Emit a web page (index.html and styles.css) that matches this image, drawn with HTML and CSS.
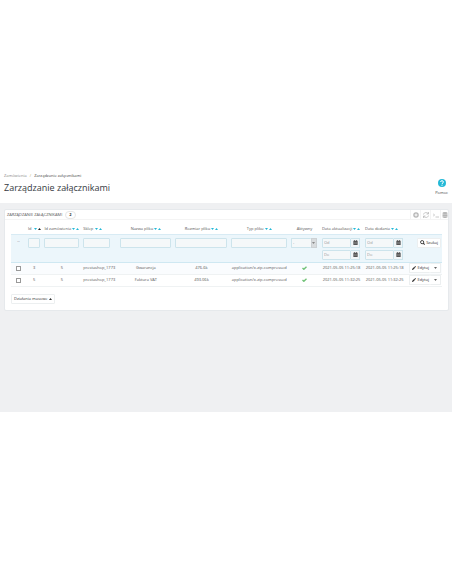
FILE: index.html
```html
<!DOCTYPE html>
<html lang="pl">

<head>
    <meta charset="UTF-8">
    <meta name="viewport" content="width=device-width, initial-scale=1.0">
    <title>Zarządzanie załącznikami</title>
    <link rel="stylesheet" href="styles.css">
</head>

<body>
    <svg width="0" height="0" class="sprite" aria-hidden="true">
        <symbol id="down" viewBox="0 0 6 4"><path d="M0 0h6L3 4z" fill="currentColor"/></symbol>
        <symbol id="up" viewBox="0 0 6 4"><path d="M0 4h6L3 0z" fill="currentColor"/></symbol>
        <symbol id="calendar" viewBox="0 0 14 14"><path d="M1 2h2V0h2v2h4V0h2v2h2v12H1zM3 6v1h2V6zm3 0v1h2V6zm3 0v1h2V6zM3 9v1h2V9zm3 0v1h2V9zm3 0v1h2V9z" fill="currentColor" fill-rule="evenodd"/></symbol>
        <symbol id="check" viewBox="0 0 14 12"><path d="M1 6l4 4 8-8" fill="none" stroke="currentColor" stroke-width="4"/></symbol>
        <symbol id="pencil" viewBox="0 0 14 14"><path d="M0 14l1-4 7-7 3 3-7 7zM9 2l2-2 3 3-2 2z" fill="currentColor"/></symbol>
        <symbol id="search" viewBox="0 0 14 14"><circle cx="6" cy="6" r="4.5" fill="none" stroke="currentColor" stroke-width="2.5"/><path d="M9 9l4 4" stroke="currentColor" stroke-width="3"/></symbol>
    </svg>

    <header class="page-head">
        <div>
            <nav class="breadcrumb">
                <a href="#">Zamówienia</a><span class="slash">/</span><span>Zarządzanie załącznikami</span>
            </nav>
            <h1>Zarządzanie załącznikami</h1>
        </div>
        <a href="#" class="help">
            <svg viewBox="0 0 20 20"><circle cx="10" cy="10" r="10" fill="#25b9d7"/><path d="M6.5 7.5c0-4.5 7-4.5 7 0 0 2.5-3.5 2.5-3.5 5" fill="none" stroke="#fff" stroke-width="2.5"/><circle cx="10" cy="15.5" r="1.5" fill="#fff"/></svg>
            <span>Pomoc</span>
        </a>
    </header>

    <main class="content">
        <section class="panel">
            <div class="panel-heading">
                <h2>ZARZĄDZANIE ZAŁĄCZNIKAMI</h2>
                <span class="count">2</span>
                <div class="tools">
                    <button type="button" aria-label="Dodaj"><svg viewBox="0 0 12 12"><circle cx="6" cy="6" r="5.5" fill="currentColor"/><path d="M6 3v6M3 6h6" stroke="#fff" stroke-width="2"/></svg></button>
                    <button type="button" aria-label="Odśwież"><svg viewBox="0 0 12 12"><path d="M1 5c1-5 8-5 10-1M11 0v4H7M11 7c-1 5-8 5-10 1M1 12V8h4" fill="none" stroke="currentColor" stroke-width="1.5"/></svg></button>
                    <button type="button" aria-label="Pokaż zapytanie SQL"><svg viewBox="0 0 12 12"><path d="M0 3l3 3-3 3M5 10h7" fill="none" stroke="currentColor" stroke-width="1.5"/></svg></button>
                    <button type="button" aria-label="Eksportuj do SQL"><svg viewBox="0 0 12 12"><ellipse cx="6" cy="2" rx="5" ry="2" fill="currentColor"/><path d="M1 3h10v2.500H1zM1 6h10v2.500H1zM1 9h10v1.500c-2 2-8 2-10 0z" fill="currentColor"/></svg></button>
                </div>
            </div>

            <table>
                <colgroup>
                    <col class="c-check">
                    <col class="c-id">
                    <col class="c-order">
                    <col class="c-shop">
                    <col class="c-name">
                    <col class="c-size">
                    <col class="c-type">
                    <col class="c-active">
                    <col class="c-date">
                    <col class="c-date">
                    <col>
                </colgroup>
                <thead>
                    <tr>
                        <th></th>
                        <th class="current">Id <svg class="sort"><use href="#down"/></svg><svg class="sort"><use href="#up"/></svg></th>
                        <th>Id zamówienia<svg class="sort"><use href="#down"/></svg><svg class="sort"><use href="#up"/></svg></th>
                        <th class="left">Sklep <svg class="sort"><use href="#down"/></svg><svg class="sort"><use href="#up"/></svg></th>
                        <th>Nazwa pliku<svg class="sort"><use href="#down"/></svg><svg class="sort"><use href="#up"/></svg></th>
                        <th>Rozmiar pliku<svg class="sort"><use href="#down"/></svg><svg class="sort"><use href="#up"/></svg></th>
                        <th>Typ pliku<svg class="sort"><use href="#down"/></svg><svg class="sort"><use href="#up"/></svg></th>
                        <th>Aktywny</th>
                        <th class="left">Data aktualizacji<svg class="sort"><use href="#down"/></svg><svg class="sort"><use href="#up"/></svg></th>
                        <th class="left">Data dodania<svg class="sort"><use href="#down"/></svg><svg class="sort"><use href="#up"/></svg></th>
                        <th></th>
                    </tr>
                    <tr class="filter">
                        <td>--</td>
                        <td><input type="text" aria-label="Id"></td>
                        <td><input type="text" aria-label="Id zamówienia"></td>
                        <td class="left"><input type="text" class="short" aria-label="Sklep"></td>
                        <td><input type="text" aria-label="Nazwa pliku"></td>
                        <td><input type="text" aria-label="Rozmiar pliku"></td>
                        <td><input type="text" aria-label="Typ pliku"></td>
                        <td>
                            <div class="select">
                                <select aria-label="Aktywny"><option>-</option><option>Tak</option><option>Nie</option></select>
                                <span class="arrow"><svg class="sort"><use href="#down"/></svg></span>
                            </div>
                        </td>
                        <td>
                            <div class="date"><input type="text" placeholder="Od" aria-label="Data aktualizacji od"><span class="addon"><svg><use href="#calendar"/></svg></span></div>
                            <div class="date"><input type="text" placeholder="Do" aria-label="Data aktualizacji do"><span class="addon"><svg><use href="#calendar"/></svg></span></div>
                        </td>
                        <td>
                            <div class="date"><input type="text" placeholder="Od" aria-label="Data dodania od"><span class="addon"><svg><use href="#calendar"/></svg></span></div>
                            <div class="date"><input type="text" placeholder="Do" aria-label="Data dodania do"><span class="addon"><svg><use href="#calendar"/></svg></span></div>
                        </td>
                        <td class="right"><button type="button" class="btn search"><svg><use href="#search"/></svg>Szukaj</button></td>
                    </tr>
                </thead>
                <tbody>
                    <tr>
                        <td><input type="checkbox" aria-label="Zaznacz 3"></td>
                        <td>3</td>
                        <td>5</td>
                        <td class="left">prestashop_1773</td>
                        <td>Gwarancja</td>
                        <td>476.6k</td>
                        <td>application/x-zip-compressed</td>
                        <td><svg class="yes"><use href="#check"/></svg></td>
                        <td>2021-05-05 11:25:18</td>
                        <td>2021-05-05 11:25:18</td>
                        <td class="right">
                            <div class="btn-group"><button type="button" class="btn"><svg><use href="#pencil"/></svg>Edytuj</button><button type="button" class="btn toggle" aria-label="Więcej"><svg class="sort"><use href="#down"/></svg></button></div>
                        </td>
                    </tr>
                    <tr>
                        <td><input type="checkbox" aria-label="Zaznacz 5"></td>
                        <td>5</td>
                        <td>5</td>
                        <td class="left">prestashop_1773</td>
                        <td>Faktura VAT</td>
                        <td>493.06k</td>
                        <td>application/x-zip-compressed</td>
                        <td><svg class="yes"><use href="#check"/></svg></td>
                        <td>2021-05-05 11:32:25</td>
                        <td>2021-05-05 11:32:25</td>
                        <td class="right">
                            <div class="btn-group"><button type="button" class="btn"><svg><use href="#pencil"/></svg>Edytuj</button><button type="button" class="btn toggle" aria-label="Więcej"><svg class="sort"><use href="#down"/></svg></button></div>
                        </td>
                    </tr>
                </tbody>
            </table>

            <div class="bulk">
                <button type="button" class="btn">Działania masowe <svg class="sort"><use href="#up"/></svg></button>
            </div>
        </section>
    </main>
</body>

</html>
```

FILE: styles.css
```css
* {
    box-sizing: border-box;
}

body {
    margin: 0;
    padding-top: 172px;
    background: #fff;
    color: #555;
    font-family: 'Open Sans', 'Noto Sans', sans-serif;
    font-size: 4px;
    line-height: 6px;
}

a {
    color: inherit;
    text-decoration: none;
}

button,
input,
select {
    font: inherit;
    color: inherit;
}

.sprite {
    display: block;
    height: 0;
}

.page-head {
    display: flex;
    justify-content: space-between;
    height: 31px;
    padding: 1px 4px 0;
}

.breadcrumb {
    color: #444;
}

.breadcrumb a {
    color: #888;
}

.slash {
    margin: 0 3px;
    color: #b5a95a;
}

h1 {
    margin: 3px 0 0;
    color: #363a41;
    font-size: 9px;
    font-weight: 400;
    line-height: 12px;
}

.help {
    display: flex;
    flex-direction: column;
    align-items: center;
    gap: 3px;
    padding-top: 6px;
    color: #444;
}

.help svg {
    width: 8px;
    height: 8px;
}

.content {
    min-height: 209px;
    padding: 6px 3px 0 4px;
    background: #eff0f2;
}

.panel {
    padding: 0 6px;
    background: #fff;
    border: 1px solid #e6e9ec;
    border-radius: 2px;
}

.panel-heading {
    display: flex;
    align-items: center;
    height: 10px;
    margin: 0 -6px 3px;
    padding-left: 2px;
    border-bottom: 1px solid #f4f4f4;
}

h2 {
    margin: 0;
    font-size: 4px;
    font-weight: 400;
}

.count {
    margin-left: 3px;
    padding: 0 3px;
    border: 1px solid #e6e6e6;
    border-radius: 4px;
    color: #333;
    font-weight: 700;
}

.tools {
    display: flex;
    margin-left: auto;
}

.tools button {
    display: flex;
    align-items: center;
    justify-content: center;
    width: 10px;
    height: 9px;
    padding: 0;
    background: none;
    border: 0;
    border-left: 1px solid #f3f3f3;
    color: #b5b5b5;
}

.tools button:last-child {
    width: 8px;
}

.tools svg {
    width: 6px;
    height: 6px;
}

table {
    width: 100%;
    border-collapse: collapse;
    table-layout: fixed;
}

.c-check { width: 3.5%; }
.c-id { width: 3.8%; }
.c-order { width: 9%; }
.c-shop { width: 8.6%; }
.c-name { width: 12.8%; }
.c-size { width: 13%; }
.c-type { width: 13.8%; }
.c-active { width: 7.2%; }
.c-date { width: 10%; }

th,
td {
    height: 12px;
    padding: 0 2px;
    text-align: center;
    white-space: nowrap;
}

th {
    height: 11px;
    padding: 2px 1px 0;
    font-weight: 400;
}

.left {
    text-align: left;
}

th.left {
    padding-left: 2px;
}

.right {
    text-align: right;
    padding: 0 1px;
}

.sort {
    width: 3px;
    height: 2px;
    margin-left: 1px;
    vertical-align: middle;
}

th .sort {
    color: #25b9d7;
}

.current .sort:last-child {
    color: #222;
}

.filter td {
    height: 28px;
    padding-top: 3px;
    vertical-align: top;
    background: #ecf6fb;
    border-top: 1px solid #d8ebf4;
    border-bottom: 1px solid #cfe8f2;
}

input[type="text"],
select {
    display: block;
    flex: 1;
    width: 100%;
    min-width: 0;
    height: 10px;
    padding: 0 1px;
    background: #f5f8f9;
    border: 1px solid #cde4ec;
    border-radius: 1px;
}

input.short {
    width: 80%;
}

input::placeholder {
    color: #999;
    opacity: 1;
}

.select,
.date {
    display: flex;
    margin-right: 1px;
}

.select select {
    appearance: none;
    border-right: 0;
    color: #777;
}

.arrow,
.addon {
    display: flex;
    align-items: center;
    justify-content: center;
    width: 6px;
    height: 10px;
    background: #d9dcde;
    border: 1px solid #ccd1d4;
}

.arrow .sort {
    margin: 0;
    color: #888;
}

.date + .date {
    margin-top: 2px;
}

.addon {
    width: 9px;
    background: #f1f6f8;
    border-color: #cde4ec;
    border-left: 0;
}

.addon svg {
    width: 5px;
    height: 5px;
}

tbody tr {
    border-bottom: 1px solid #eff2f3;
}

tbody tr:first-child {
    background: #fafcfe;
}

input[type="checkbox"] {
    appearance: none;
    display: block;
    width: 5px;
    height: 5px;
    margin: 0 auto;
    background: #fff;
    border: 1px solid #999;
}

.yes {
    width: 5px;
    height: 4px;
    color: #72c279;
    vertical-align: middle;
}

.btn {
    display: inline-flex;
    align-items: center;
    height: 10px;
    padding: 0 2px;
    background: #fff;
    border: 1px solid #eceff0;
    border-radius: 1px;
    color: #333;
}

.btn svg:not(.sort) {
    width: 4px;
    height: 4px;
    margin-right: 1px;
}

.search svg:not(.sort) {
    width: 5px;
    height: 5px;
}

.btn-group {
    display: inline-flex;
    vertical-align: middle;
}

.btn-group .btn:first-child {
    padding-right: 1px;
    border-right: 0;
}

.btn-group .toggle {
    padding: 0 3px;
    border-left: 0;
}

.toggle .sort {
    color: #666;
}

.bulk {
    display: flex;
    padding: 7px 0 6px;
}
```
